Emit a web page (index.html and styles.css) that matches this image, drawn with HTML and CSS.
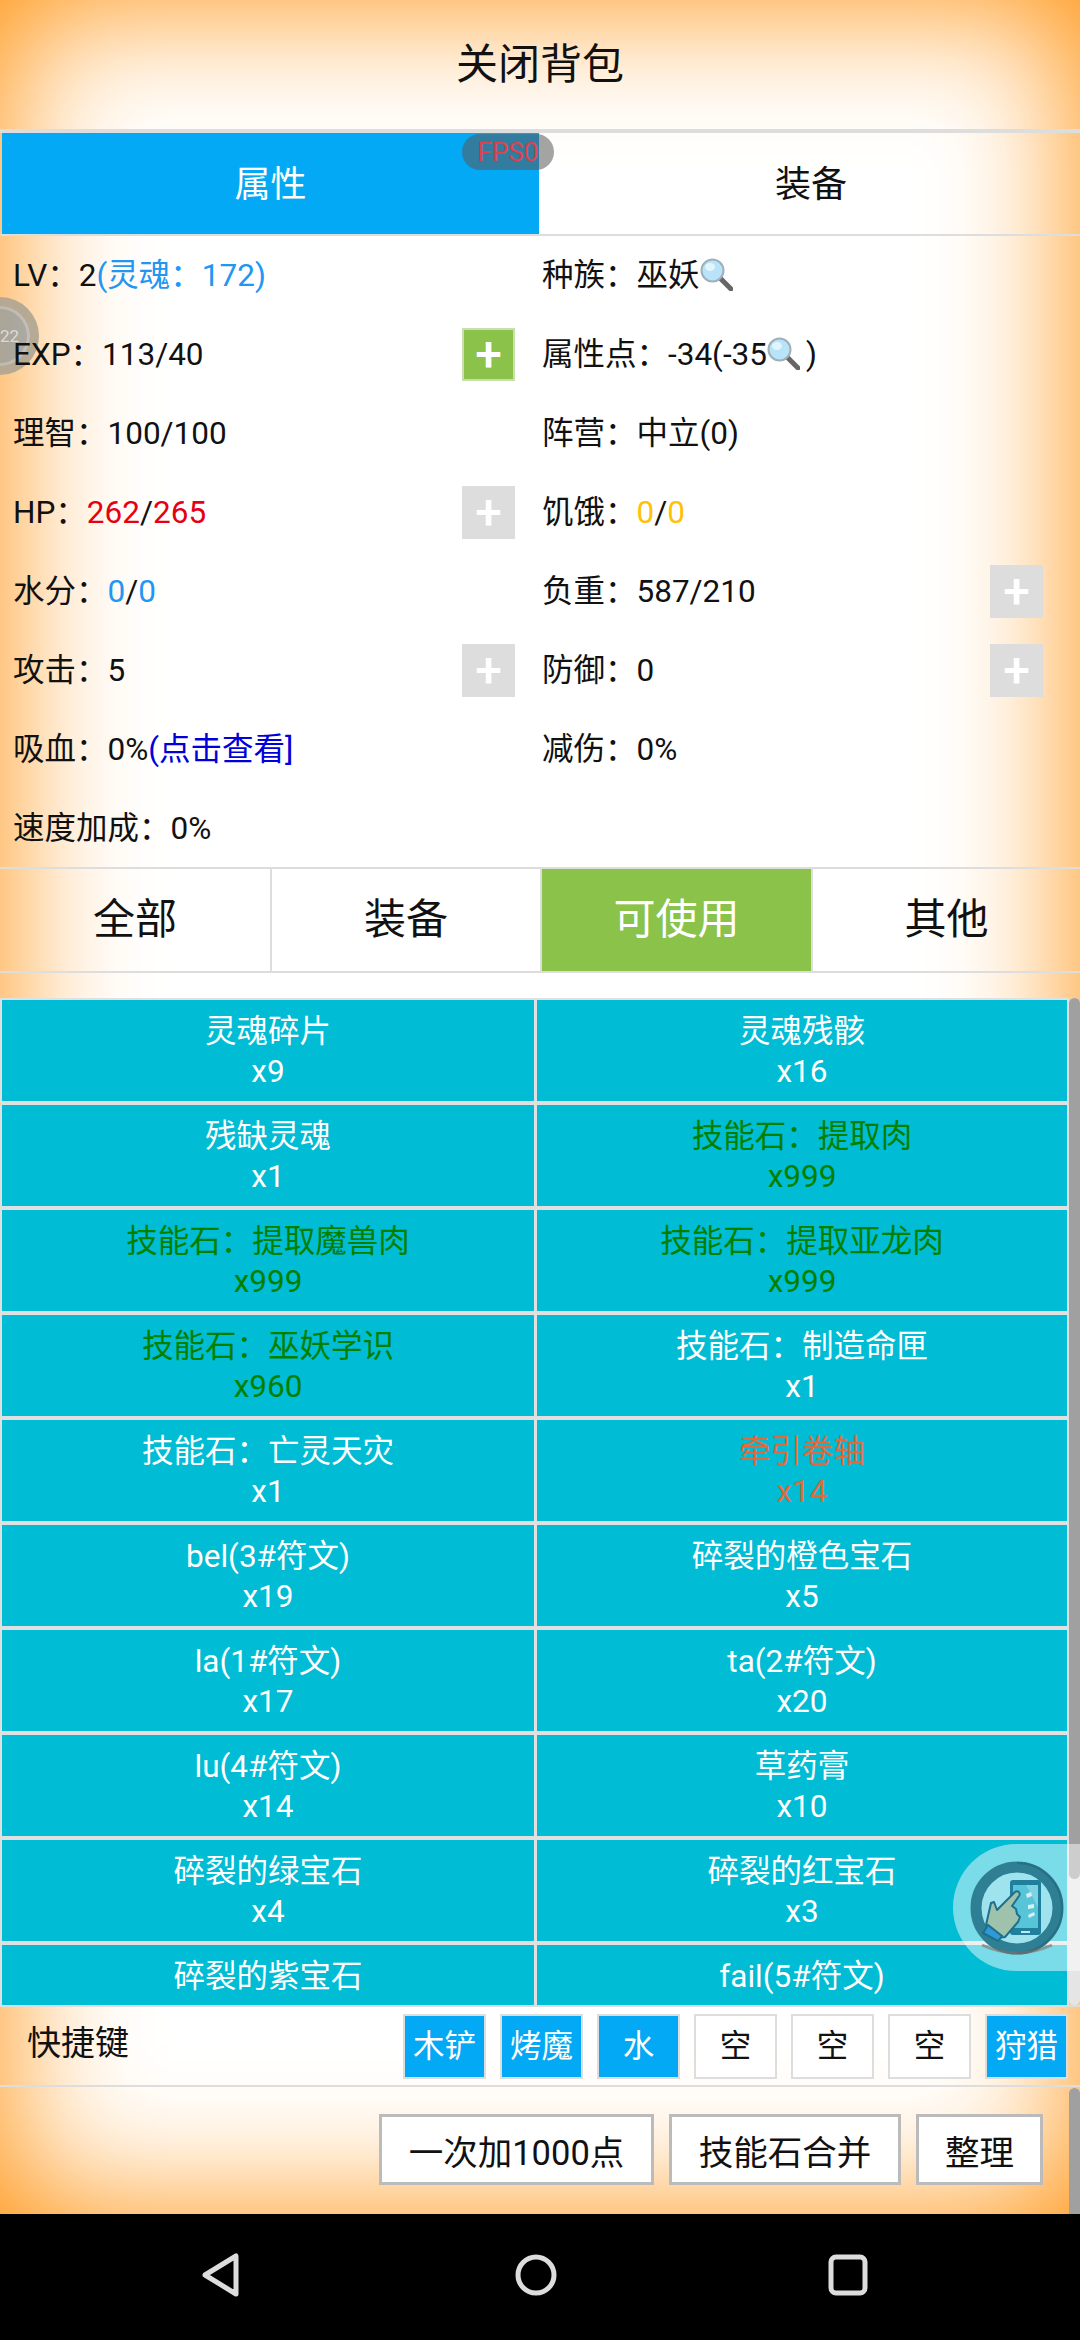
FILE: index.html
```html
<!DOCTYPE html>
<html lang="zh-CN">
<head>
    <meta charset="UTF-8">
    <meta name="viewport" content="width=device-width, initial-scale=1.0">
    <link rel="stylesheet" href="styles.css">
    <title>背包</title>
</head>
<body>
    <div class="screen">
        <div class="title">关闭背包</div>

        <div class="tabs">
            <div class="tab tab-active">属性</div>
            <div class="tab">装备</div>
            <div class="fps">FPS0</div>
        </div>

        <div class="stats">
            <div class="stat"><span>LV：2<span class="blue">(灵魂：172)</span></span></div>
            <div class="stat"><span>种族：巫妖<svg class="lens" viewBox="0 0 33 33"><use href="#lens"/></svg></span></div>
            <div class="stat"><span>EXP：113/40</span><button class="plus plus-on">+</button></div>
            <div class="stat"><span>属性点：-34(-35<svg class="lens" viewBox="0 0 33 33"><use href="#lens"/></svg>)</span></div>
            <div class="stat"><span>理智：100/100</span></div>
            <div class="stat"><span>阵营：中立(0)</span></div>
            <div class="stat"><span>HP：<span class="red">262</span>/<span class="red">265</span></span><button class="plus">+</button></div>
            <div class="stat"><span>饥饿：<span class="yellow">0</span>/<span class="yellow">0</span></span></div>
            <div class="stat"><span>水分：<span class="blue">0</span>/<span class="blue">0</span></span></div>
            <div class="stat"><span>负重：587/210</span><button class="plus">+</button></div>
            <div class="stat"><span>攻击：5</span><button class="plus">+</button></div>
            <div class="stat"><span>防御：0</span><button class="plus">+</button></div>
            <div class="stat"><span>吸血：0%<span class="link">(点击查看]</span></span></div>
            <div class="stat"><span>减伤：0%</span></div>
            <div class="stat"><span>速度加成：0%</span></div>
        </div>

        <div class="filters">
            <div class="filter">全部</div>
            <div class="filter">装备</div>
            <div class="filter filter-active">可使用</div>
            <div class="filter">其他</div>
        </div>

        <div class="list-wrap">
            <div class="items">
                <div class="item">灵魂碎片<br>x9</div>
                <div class="item">灵魂残骸<br>x16</div>
                <div class="item">残缺灵魂<br>x1</div>
                <div class="item item-green">技能石：提取肉<br>x999</div>
                <div class="item item-green">技能石：提取魔兽肉<br>x999</div>
                <div class="item item-green">技能石：提取亚龙肉<br>x999</div>
                <div class="item item-green">技能石：巫妖学识<br>x960</div>
                <div class="item">技能石：制造命匣<br>x1</div>
                <div class="item">技能石：亡灵天灾<br>x1</div>
                <div class="item item-orange">牵引卷轴<br>x14</div>
                <div class="item">bel(3#符文)<br>x19</div>
                <div class="item">碎裂的橙色宝石<br>x5</div>
                <div class="item">la(1#符文)<br>x17</div>
                <div class="item">ta(2#符文)<br>x20</div>
                <div class="item">lu(4#符文)<br>x14</div>
                <div class="item">草药膏<br>x10</div>
                <div class="item">碎裂的绿宝石<br>x4</div>
                <div class="item">碎裂的红宝石<br>x3</div>
                <div class="item">碎裂的紫宝石<br>x1</div>
                <div class="item">fail(5#符文)<br>x1</div>
            </div>
            <div class="scrollbar"><div class="thumb"></div></div>
        </div>

        <div class="shortcuts">
            <div class="shortcuts-label">快捷键</div>
            <div class="slots">
                <div class="slot slot-on">木铲</div>
                <div class="slot slot-on">烤魔</div>
                <div class="slot slot-on">水</div>
                <div class="slot">空</div>
                <div class="slot">空</div>
                <div class="slot">空</div>
                <div class="slot slot-on">狩猎</div>
            </div>
        </div>

        <div class="actions">
            <button class="action action-add">一次加1000点</button>
            <button class="action action-merge">技能石合并</button>
            <button class="action action-sort">整理</button>
            <div class="page-thumb"></div>
        </div>

        <!-- floating balls -->
        <div class="ball-left"><span>22</span></div>
        <div class="ball-right">
            <svg class="ball-icon" viewBox="0 0 94 94">
                <circle cx="47" cy="47" r="41" fill="#9fe3ef" stroke="#2f7f94" stroke-width="11"/>
                <path d="M47 92a45 45 0 0 0 0-90" fill="none" stroke="#276f84" stroke-width="2"/>
                <rect x="40" y="19" width="31" height="55" rx="3" fill="#1f7f9c"/>
                <rect x="43" y="24" width="25" height="43" fill="#58c4d8"/>
                <path d="M56 24h12v22z" fill="#7dd3e2"/>
                <rect x="51" y="70" width="9" height="2" fill="#bfeaf2"/>
                <path d="M56 33l5-2 1 4-5 2zM58 44l6-1v4l-6 1zM58 54l6-3 1 3-6 3z" fill="#d5f1f6"/>
                <path d="M20 70l-4-6 5-22 3-1 3 8 18-18c3-2 6 1 4 4l-7 10 4 3 1 5 3 3-2 5-13 15-7 1z" fill="#9fc2ad" stroke="#1f6f8a" stroke-width="2" stroke-linejoin="round"/>
                <path d="M18 64l-5 8 15 8 4-5z" fill="#2f9ad8" stroke="#1f6f8a" stroke-width="2"/>
                <path d="M12 84q35 16 70 0" fill="none" stroke="#8a6a62" stroke-width="3" opacity=".6"/>
            </svg>
        </div>
    </div>

    <div class="navbar">
        <svg width="40" height="44" viewBox="0 0 40 44"><path d="M35 3v38L4 22z" fill="none" stroke="#ddd" stroke-width="5" stroke-linejoin="round"/></svg>
        <svg width="44" height="44" viewBox="0 0 44 44"><circle cx="22" cy="22" r="18" fill="none" stroke="#ddd" stroke-width="5"/></svg>
        <svg width="40" height="42" viewBox="0 0 40 42"><rect x="3" y="3" width="34" height="36" rx="5" fill="none" stroke="#ddd" stroke-width="5"/></svg>
    </div>

    <svg class="defs" width="0" height="0">
        <defs>
            <g id="lens">
                <line x1="21" y1="21" x2="31" y2="31" stroke="#666" stroke-width="5" stroke-linecap="round"/>
                <circle cx="12.5" cy="12.5" r="11" fill="#b9e3f8" stroke="#9fb0b8" stroke-width="2"/>
                <ellipse cx="10" cy="9" rx="5" ry="4" fill="#e2f5fd"/>
            </g>
        </defs>
    </svg>
</body>
</html>
```

FILE: styles.css
```css
* {
    box-sizing: border-box;
}

body {
    margin: 0;
    width: 1080px;
    height: 2340px;
    overflow: hidden;
    background: #fff;
    font-family: Roboto, "Noto Sans CJK SC", sans-serif;
    font-size: 31.5px;
    line-height: 40px;
    color: #111;
}

.screen {
    position: relative;
    height: 2214px;
    display: flex;
    flex-direction: column;
    overflow: hidden;
    box-shadow: inset 0 0 140px #ff8c00;
}

.title {
    height: 129px;
    display: flex;
    align-items: center;
    justify-content: center;
    font-size: 42px;
}

.tabs {
    position: relative;
    height: 107px;
    display: flex;
    gap: 3px;
    padding-left: 2px;
    border-top: 4px solid #ddd;
    border-bottom: 2px solid #ddd;
    font-size: 36px;
}

.tab {
    flex: 1;
    display: flex;
    align-items: center;
    justify-content: center;
    padding-top: 2px;
}

.tab-active {
    flex: none;
    width: 537px;
    background: #03a9f4;
    color: #fff;
}

.fps {
    position: absolute;
    left: 462px;
    top: 1px;
    width: 92px;
    height: 36px;
    border-radius: 18px;
    background: rgba(90, 90, 90, 0.55);
    color: #e0414a;
    font-size: 26px;
    line-height: 36px;
    text-align: center;
}

.stats {
    position: relative;
    z-index: 1;
    height: 631px;
    display: grid;
    grid-template-columns: 542px 538px;
    grid-auto-rows: 79px;
}

.stat {
    display: flex;
    align-items: center;
    justify-content: space-between;
    padding-right: 27px;
}

.stat:nth-child(odd) {
    padding-left: 13px;
}

.stat:nth-child(even) {
    padding-right: 37px;
}

.lens {
    width: 33px;
    height: 33px;
    margin-right: 6px;
    vertical-align: -5px;
}

.blue {
    color: #2196f3;
}

.red {
    color: #e60012;
}

.yellow {
    color: #ffc107;
}

.link {
    color: #0000d8;
}

.plus {
    width: 53px;
    height: 53px;
    padding: 0;
    border: 2px solid #ddd;
    background: #ddd;
    color: #fff;
    font-family: inherit;
    font-size: 48px;
    font-weight: 500;
    line-height: 46px;
}

.plus-on {
    border-color: #c9dfb0;
    background: #8bc34a;
}

.filters {
    height: 106px;
    flex: none;
    display: grid;
    grid-template-columns: 272px 270px 271px 267px;
    border-top: 2px solid #ddd;
    border-bottom: 2px solid #ddd;
    font-size: 42px;
}

.filter {
    display: flex;
    align-items: center;
    justify-content: center;
    border-right: 2px solid #ddd;
}

.filter:last-child {
    border-right: none;
}

.filter-active {
    background: #8bc34a;
    color: #fff;
}

.list-wrap {
    height: 1009px;
    flex: none;
    margin-top: 25px;
    display: flex;
    overflow: hidden;
    border-bottom: 2px solid #ddd;
}

.items {
    width: 1069px;
    flex: none;
    align-self: flex-start;
    display: grid;
    grid-template-columns: 532px 530px;
    grid-auto-rows: 101px;
    gap: 4px 3px;
    padding: 2px 2px 0;
    background: #e0e0e0;
}

.item {
    background: #00bcd4;
    color: #fff;
    padding-top: 12px;
    text-align: center;
}

.item-green {
    color: #008000;
}

.item-orange {
    color: #e2693a;
}

.scrollbar {
    flex: 1;
    border-radius: 6px;
    background: #e5e5e5;
}

.thumb {
    height: 881px;
    border-radius: 6px;
    background: #a0a0a0;
}

.shortcuts {
    height: 80px;
    flex: none;
    display: flex;
    justify-content: space-between;
    padding: 7px 12px 0 27px;
    border-bottom: 2px solid #ddd;
}

.shortcuts-label {
    font-size: 34px;
    line-height: 58px;
}

.slots {
    display: flex;
    gap: 14px;
}

.slot {
    width: 83px;
    height: 65px;
    display: flex;
    align-items: center;
    justify-content: center;
    border: 2px solid #ddd;
    background: #fff;
}

.slot-on {
    background: #03a9f4;
    color: #fff;
}

.actions {
    position: relative;
    flex: 1;
    display: flex;
    justify-content: flex-end;
    gap: 15px;
    padding: 27px 37px 0 0;
}

.action {
    height: 71px;
    padding: 0;
    border: 3px solid #bbb;
    background: #fff;
    color: #111;
    font-family: inherit;
    font-size: 34.5px;
}

.action-add {
    width: 275px;
}

.action-merge {
    width: 232px;
}

.action-sort {
    width: 127px;
}

.page-thumb {
    position: absolute;
    right: 0;
    top: 1px;
    bottom: 0;
    width: 11px;
    border-radius: 6px 6px 0 0;
    background: #a0a0a0;
}

.ball-left {
    position: absolute;
    left: -39px;
    top: 297px;
    width: 78px;
    height: 78px;
    border: 9px solid rgba(190, 170, 140, 0.6);
    border-radius: 50%;
    background: rgba(135, 150, 160, 0.7);
    box-shadow: inset 0 0 0 3px rgba(255, 255, 255, 0.25);
    color: rgba(255, 255, 255, 0.6);
    font-size: 17px;
    line-height: 60px;
    text-align: right;
    padding-right: 11px;
}

.ball-right {
    position: absolute;
    left: 953px;
    top: 1844px;
    width: 127px;
    height: 127px;
    display: flex;
    align-items: center;
    padding-left: 17px;
    border-radius: 64px 0 0 64px;
    background: rgba(255, 255, 255, 0.48);
}

.ball-icon {
    width: 94px;
    height: 94px;
}

.navbar {
    height: 126px;
    display: flex;
    align-items: center;
    padding-bottom: 4px;
    background: #000;
}

.navbar svg:nth-child(1) {
    margin-left: 201px;
}

.navbar svg:nth-child(2) {
    margin-left: 273px;
}

.navbar svg:nth-child(3) {
    margin-left: 270px;
}

.defs {
    position: absolute;
}
```
